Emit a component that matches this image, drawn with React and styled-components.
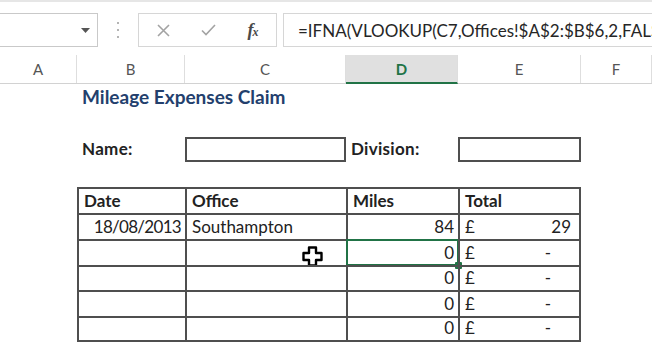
import React from "react";
import styled, { createGlobalStyle, css } from "styled-components";

const GlobalStyle = createGlobalStyle`
  html, body {
    margin: 0;
    padding: 0;
    background: #ffffff;
  }
  body {
    width: 652px;
    height: 342px;
    overflow: hidden;
    font-family: Lato, "Liberation Sans", sans-serif;
  }
`;

const COLUMNS = "77px 108px 161px 112px 123px 1fr";
const LINE = "2px solid #4f4f4f";
const GREEN = "#217346";

const Window = styled.div`
  width: 652px;
  height: 342px;
  overflow: hidden;
  background: #fff;
`;

const FormulaBar = styled.div`
  height: 55px;
  box-sizing: border-box;
  border-top: 2px solid #e6e6e6;
  padding-top: 11px;
  display: flex;
  align-items: flex-start;
`;

const NameBox = styled.div`
  margin-left: -2px;
  width: 100px;
  height: 34px;
  box-sizing: border-box;
  border: 1px solid #c9c9c9;
  display: flex;
  align-items: center;
  justify-content: flex-end;
  padding-right: 7px;
`;

const Grip = styled.div`
  width: 40px;
  height: 34px;
  display: flex;
  flex-direction: column;
  align-items: center;
  justify-content: center;
  gap: 5px;
`;

const GripDot = styled.span`
  width: 2px;
  height: 2px;
  background: #b4b4b4;
`;

const ActionBox = styled.div`
  width: 139px;
  height: 34px;
  box-sizing: border-box;
  border: 1px solid #d6d6d6;
  display: grid;
  grid-template-columns: 48px 42px 1fr;
  align-items: center;
  justify-items: center;
`;

const Fx = styled.span`
  font-family: "Liberation Serif", serif;
  font-style: italic;
  font-weight: bold;
  font-size: 18px;
  color: #4a4a4a;
  letter-spacing: -1px;

  small {
    font-size: 12px;
  }
`;

const FormulaInput = styled.div`
  flex: 1;
  margin-left: 6px;
  margin-right: -4px;
  height: 34px;
  box-sizing: border-box;
  border: 1px solid #d6d6d6;
  padding-left: 14px;
  display: flex;
  align-items: center;
  font-size: 17px;
  color: #262626;
  white-space: nowrap;
  overflow: hidden;
`;

const HeaderRow = styled.div`
  display: grid;
  grid-template-columns: ${COLUMNS};
  height: 29px;
  box-sizing: border-box;
  border-bottom: 1px solid #d2d2d2;
`;

const ColHeader = styled.div`
  display: flex;
  align-items: center;
  justify-content: center;
  border-right: 1px solid #dedede;
  font-size: 15px;
  color: #555;
  ${({ $active }) =>
    $active &&
    css`
      background: #e0e0e0;
      color: ${GREEN};
      font-weight: bold;
      border-bottom: 2px solid ${GREEN};
      margin-bottom: -1px;
    `}
`;

const Sheet = styled.div`
  display: grid;
  grid-template-columns: ${COLUMNS};
  grid-auto-rows: 25.8px;
  color: #222;
  font-size: 17px;
`;

const Cell = styled.div`
  position: relative;
  box-sizing: border-box;
  display: flex;
  align-items: flex-end;
  padding: 0 4px 2px 5px;
  white-space: nowrap;
  grid-column: ${({ $col }) => $col};
  grid-row: ${({ $row }) => $row};
`;

const Title = styled(Cell)`
  font-size: 19px;
  font-weight: bold;
  color: #23406d;
  overflow: visible;
`;

const Label = styled(Cell)`
  font-weight: bold;
  letter-spacing: 0.3px;
`;

const InputCell = styled(Cell)`
  border: ${LINE};
  margin-top: 1px;
  margin-bottom: -1px;
`;

const TableCell = styled(Cell)`
  border-left: ${LINE};
  border-top: ${LINE};
  justify-content: ${({ $align }) => ($align === "right" ? "flex-end" : "flex-start")};
  font-weight: ${({ $bold }) => ($bold ? "bold" : "normal")};
  ${({ $lastCol }) => $lastCol && css`border-right: ${LINE};`}
  ${({ $lastRow }) => $lastRow && css`border-bottom: ${LINE};`}
`;

const DateCell = styled(TableCell)`
  letter-spacing: -0.7px;
`;

const Money = styled(TableCell)`
  justify-content: space-between;
  padding-right: ${({ $dash }) => ($dash ? "28px" : "8px")};
`;

const Selection = styled.div`
  position: absolute;
  left: -2px;
  top: -2px;
  right: -1px;
  bottom: -1px;
  border: 2px solid ${GREEN};
  pointer-events: none;
`;

const FillHandle = styled.div`
  position: absolute;
  right: -5px;
  bottom: -5px;
  width: 7px;
  height: 7px;
  border-radius: 1px;
  background: ${GREEN};
`;

const Cursor = styled.svg`
  position: absolute;
  left: 115px;
  top: 5px;
`;

const columns = ["A", "B", "C", "D", "E", "F"];

const rows = [
  { date: "18/08/2013", office: "Southampton", miles: "84", total: "29" },
  { miles: "0", total: "-", selected: true, cursor: true },
  { miles: "0", total: "-" },
  { miles: "0", total: "-" },
  { miles: "0", total: "-" },
];

const DropArrow = () => (
  <svg width="9" height="5" viewBox="0 0 9 5">
    <path d="M0 0h9L4.5 5z" fill="#555" />
  </svg>
);

const CancelIcon = () => (
  <svg width="13" height="13" viewBox="0 0 13 13">
    <path d="M1 1l11 11M12 1L1 12" stroke="#a3a3a3" strokeWidth="1.6" />
  </svg>
);

const EnterIcon = () => (
  <svg width="15" height="12" viewBox="0 0 15 12">
    <path d="M1 6.5l4 4L14 1" stroke="#a3a3a3" strokeWidth="1.6" fill="none" />
  </svg>
);

const App = () => {
  return (
    <Window>
      <GlobalStyle />
      <FormulaBar>
        <NameBox>
          <DropArrow />
        </NameBox>
        <Grip>
          <GripDot />
          <GripDot />
          <GripDot />
        </Grip>
        <ActionBox>
          <CancelIcon />
          <EnterIcon />
          <Fx>
            f<small>x</small>
          </Fx>
        </ActionBox>
        <FormulaInput>=IFNA(VLOOKUP(C7,Offices!$A$2:$B$6,2,FALSE),0)</FormulaInput>
      </FormulaBar>

      <HeaderRow>
        {columns.map((c) => (
          <ColHeader key={c} $active={c === "D"}>
            {c}
          </ColHeader>
        ))}
      </HeaderRow>

      <Sheet>
        <Title $col={2} $row={1}>Mileage Expenses Claim</Title>

        <Label $col={2} $row={3}>Name:</Label>
        <InputCell $col={3} $row={3} />
        <Label $col={4} $row={3}>Division:</Label>
        <InputCell $col={5} $row={3} />

        <TableCell $col={2} $row={5} $bold>Date</TableCell>
        <TableCell $col={3} $row={5} $bold>Office</TableCell>
        <TableCell $col={4} $row={5} $bold>Miles</TableCell>
        <TableCell $col={5} $row={5} $bold $lastCol>Total</TableCell>

        {rows.map((r, i) => {
          const row = 6 + i;
          const last = i === rows.length - 1;
          return (
            <React.Fragment key={row}>
              <DateCell $col={2} $row={row} $align="right" $lastRow={last}>
                {r.date}
              </DateCell>
              <TableCell $col={3} $row={row} $lastRow={last}>
                {r.office}
                {r.cursor && (
                  <Cursor width="21" height="21" viewBox="0 0 21 21">
                    <path
                      d="M7 1.5h7v5.5h5.5v7H14v5.5H7V14H1.5V7H7z"
                      fill="#fff"
                      stroke="#000"
                      strokeWidth="2.4"
                      strokeLinejoin="round"
                    />
                  </Cursor>
                )}
              </TableCell>
              <TableCell $col={4} $row={row} $align="right" $lastRow={last}>
                {r.miles}
                {r.selected && (
                  <Selection>
                    <FillHandle />
                  </Selection>
                )}
              </TableCell>
              <Money
                $col={5}
                $row={row}
                $lastCol
                $lastRow={last}
                $dash={r.total === "-"}
              >
                <span>£</span>
                <span>{r.total}</span>
              </Money>
            </React.Fragment>
          );
        })}
      </Sheet>
    </Window>
  );
};

export default App;
